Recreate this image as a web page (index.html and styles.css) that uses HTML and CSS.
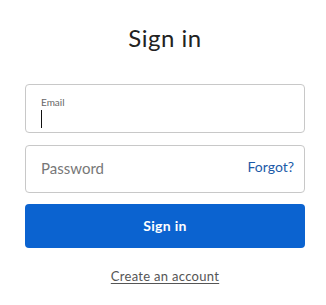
FILE: index.html
```html
<!DOCTYPE html>
<html>
<head>
<meta charset="utf-8">
<link rel="stylesheet" href="styles.css">
</head>
<body>
<main class="signin">
  <h1 class="title">Sign in</h1>
  <form class="form">
    <label class="field field-email">
      <span class="field-label">Email</span>
      <span class="caret"></span>
    </label>
    <div class="field field-password">
      <span class="placeholder">Password</span>
      <a class="forgot" href="#">Forgot?</a>
    </div>
    <button class="submit" type="button">Sign in</button>
  </form>
  <a class="create" href="#">Create an account</a>
</main>
</body>
</html>
```
FILE: styles.css
```css
html, body {
  margin: 0;
  padding: 0;
  background: #ffffff;
}
body {
  font-family: "Lato", "Open Sans", sans-serif;
  color: #222;
}
.signin {
  padding: 23px 21px 0 25px;
  display: flex;
  flex-direction: column;
}
.title {
  margin: 0;
  font-size: 24px;
  font-weight: 400;
  text-align: center;
  color: #222;
  line-height: 29px;
  letter-spacing: 0.5px;
}
.form {
  margin-top: 32px;
  display: flex;
  flex-direction: column;
}
.field {
  box-sizing: border-box;
  border: 1px solid #c8c8c8;
  border-radius: 4px;
  display: flex;
}
.field-email {
  height: 49px;
  flex-direction: column;
  padding: 11px 15px 0;
}
.field-label {
  font-size: 10px;
  color: #666;
  line-height: 12px;
}
.caret {
  display: block;
  width: 1px;
  height: 18px;
  background: #111;
  margin-top: 2px;
}
.field-password {
  margin-top: 12px;
  height: 48px;
  align-items: center;
  justify-content: space-between;
  padding: 0 10px 2px 15px;
}
.placeholder {
  font-size: 15px;
  color: #777;
}
.forgot {
  font-size: 14px;
  color: #1c5aa8;
  text-decoration: none;
  margin-top: -4px;
}
.submit {
  margin-top: 11px;
  height: 44px;
  border: 0;
  border-radius: 4px;
  background: #0b63d0;
  color: #fff;
  font-family: inherit;
  font-size: 14px;
  font-weight: 700;
  letter-spacing: 0.3px;
  padding: 0 0 2px;
}
.create {
  margin-top: 20px;
  align-self: center;
  font-size: 13px;
  color: #555;
  text-decoration: underline;
  text-underline-offset: 2px;
  letter-spacing: 0.3px;
}
```
